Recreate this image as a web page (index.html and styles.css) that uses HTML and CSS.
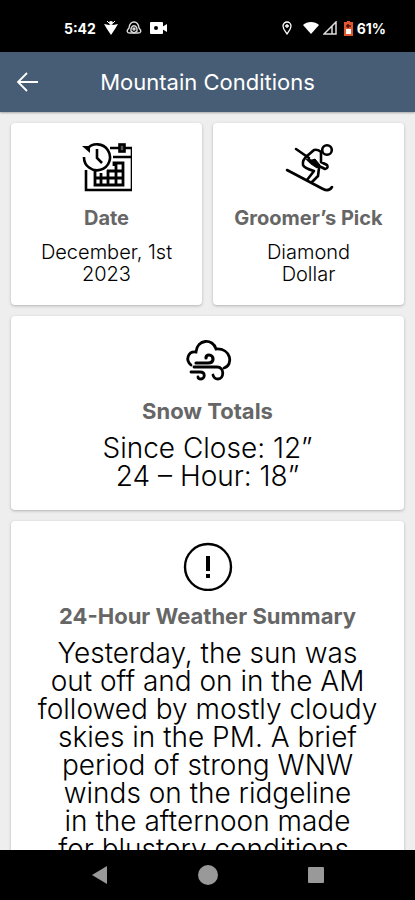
FILE: index.html
```html
<!DOCTYPE html>
<html lang="en">
    <head>
        <meta charset="UTF-8">
        <meta name="viewport" content="width=device-width, initial-scale=1.0">
        <title>Mountain Conditions</title>
        <link rel="stylesheet" href="styles.css">
    </head>

    <body>
        <div class="status-bar">
            <div class="status-group status-left">
                <span>5:42</span>
                <svg width="14" height="16" viewBox="0 0 14 16" fill="#fff">
                    <path d="M0 4l5 1h4l5-1-3 5-4 6-4-6z"/>
                    <circle cx="7" cy="3" r="2"/>
                    <path d="M3 1l2 2M11 1L9 3" stroke="#fff"/>
                </svg>
                <svg width="16" height="16" viewBox="0 0 16 16" fill="none" stroke="#ddd" stroke-width="1.4">
                    <path d="M3 8c1-8 9-8 10 0 3 3 2 5-1 5H4c-3 0-4-2-1-5z"/>
                    <path d="M5 11c-1-7 7-7 6 0l-3 2z"/>
                    <circle cx="8" cy="9" r="1"/>
                </svg>
                <svg width="17" height="14" viewBox="0 0 17 14" fill="#fff">
                    <rect x="0" y="1" width="13" height="12" rx="1"/>
                    <path d="M12 6l5-3v8l-5-3z"/>
                    <circle cx="6" cy="7" r="2" fill="#000"/>
                </svg>
            </div>
            <div class="status-group status-right">
                <svg class="pin" width="10" height="14" viewBox="0 0 10 14" fill="none" stroke="#fff" stroke-width="1.3">
                    <path d="M5 13C3 10 1 8 1 5a4 4 0 0 1 8 0c0 3-2 5-4 8zM5 3v4M3 5h4"/>
                </svg>
                <svg width="16" height="14" viewBox="0 0 16 14" fill="#fff">
                    <path d="M0 4c4-4 12-4 16 0L8 13z"/>
                </svg>
                <svg width="14" height="14" viewBox="0 0 14 14" fill="none" stroke="#ddd" stroke-width="1.5">
                    <path d="M13 1v12H1zM9 5v8"/>
                </svg>
                <svg class="battery" width="9" height="15" viewBox="0 0 9 15">
                    <path d="M3 0h3v1h3v14H0V1h3z" fill="#e0562f"/>
                    <path d="M2 8h5v5H2z" fill="#fff"/>
                    <path d="M2 5h5M4 3v4" stroke="#411" stroke-width="1.5"/>
                </svg>
                <span>61%</span>
            </div>
        </div>

        <header class="header">
            <a class="back" href="#" aria-label="Back">
                <svg width="24" height="22" viewBox="0 0 24 22" fill="none" stroke="#fff" stroke-width="1.8">
                    <path d="M22 11H2M11 2L2 11l9 9"/>
                </svg>
            </a>
            <h1>Mountain Conditions</h1>
        </header>

        <main class="conditions">
            <section class="card">
                <svg class="icon" viewBox="0 0 50 50" fill="none" stroke="#000" stroke-width="2.6">
                    <path d="M28 5h9M43 5h7v42H4V27M31 14h18"/>
                    <rect x="37.5" y="1.5" width="5" height="7" fill="#555"/>
                    <path d="M13 28v14h28V20h-9v3M12 35h29M25 28h16M19 30v12M26 27v15M34 20v22" stroke-width="2.8"/>
                    <path d="M5 6A13 13 0 1 1 2 14"/>
                    <path d="M0 3h8v7z" fill="#000" stroke="none"/>
                    <path d="M15 6v9l5 5"/>
                </svg>
                <h2>Date</h2>
                <p>December, 1st<br>2023</p>
            </section>

            <section class="card">
                <svg class="icon" viewBox="0 0 50 50" fill="none" stroke="#000" stroke-width="2.6" stroke-linecap="round" stroke-linejoin="round">
                    <circle cx="43" cy="7" r="4.8"/>
                    <path d="M3 27l36 19q6 3 9-2"/>
                    <path d="M12 6l13 9"/>
                    <path d="M23 13l7-6q4-1 7 2v10l6 3q2 3-2 4l-10-5"/>
                    <path d="M23 13q-5 4-4 9 1 3 11 6l-7 9M35 25l-1 8-6 6"/>
                    <path d="M22 16l6 1 3-1 5 6-3 3-6-4z" fill="#000" stroke-width="1"/>
                </svg>
                <h2>Groomer’s Pick</h2>
                <p>Diamond<br>Dollar</p>
            </section>

            <section class="card wide">
                <svg class="icon" viewBox="0 0 50 50" fill="none" stroke="#000" stroke-width="2.8" stroke-linecap="round">
                    <path d="M8 29C2 24 5 15 13 16 14 3 30 2 33 13c15-1 18 16 8 19"/>
                    <path d="M13 27h12c7 0 6-8 1-8q-3 0-3 3" stroke-width="3.2"/>
                    <path d="M11 31h23c8 0 7 12 1 12q-4 0-5-4"/>
                    <path d="M8 36h9c6 0 5 7 1 7q-3 0-3-2"/>
                </svg>
                <h2>Snow Totals</h2>
                <p>Since Close: 12”<br>24 – Hour: 18”</p>
            </section>

            <section class="card wide">
                <svg class="icon" viewBox="0 0 50 50" fill="none" stroke="#000">
                    <circle cx="25" cy="26" r="23" stroke-width="2.4"/>
                    <path d="M25 15v15M25 33v4" stroke-width="4"/>
                </svg>
                <h2>24-Hour Weather Summary</h2>
                <p>Yesterday, the sun was<br>out off and on in the AM<br>followed by mostly cloudy<br>skies in the PM. A brief<br>period of strong WNW<br>winds on the ridgeline<br>in the afternoon made<br>for blustery conditions.</p>
            </section>
        </main>

        <nav class="nav-bar">
            <button aria-label="Back">
                <svg width="20" height="20" viewBox="0 0 20 20" fill="#999"><path d="M2 10L17 1v18z"/></svg>
            </button>
            <button aria-label="Home">
                <svg width="20" height="20" viewBox="0 0 20 20" fill="#999"><circle cx="10" cy="10" r="10"/></svg>
            </button>
            <button aria-label="Recent apps">
                <svg width="20" height="20" viewBox="0 0 20 20" fill="#999"><rect x="2" y="2" width="16" height="16" rx="1"/></svg>
            </button>
        </nav>
    </body>
</html>
```
FILE: styles.css
```css
* {
    box-sizing: border-box;
}

body {
    display: flex;
    flex-direction: column;
    height: 100vh;
    margin: 0;
    background-color: #eee;
    font-family: Inter, "Open Sans", sans-serif;
    color: #000;
}

.status-bar {
    display: flex;
    flex-shrink: 0;
    justify-content: space-between;
    height: 52px;
    padding: 4px 29px 0 64px;
    background-color: #000;
    color: #fff;
    font-size: 14px;
    font-weight: 700;
}

.status-group {
    display: flex;
    align-items: center;
}

.status-left {
    gap: 8px;
}

.status-right {
    gap: 4px;
}

.pin {
    margin-right: 7px;
}

.battery {
    margin-left: 3px;
}

.header {
    display: grid;
    grid-template-columns: 56px 1fr 56px;
    flex-shrink: 0;
    align-items: center;
    height: 60px;
    background-color: #475d75;
    box-shadow: 0 1px 2px rgba(0, 0, 0, 0.3);
}

.back {
    display: flex;
    padding-left: 16px;
}

.header h1 {
    margin: 0;
    color: #fff;
    font-size: 22px;
    font-weight: 400;
    text-align: center;
}

.conditions {
    display: grid;
    grid-template-columns: 1fr 1fr;
    flex: 1;
    align-content: start;
    gap: 11px;
    min-height: 0;
    padding: 11px;
    overflow-y: auto;
    scrollbar-width: none;
}

.card {
    display: flex;
    flex-direction: column;
    align-items: center;
    padding: 20px 0;
    border-radius: 4px;
    background-color: #fff;
    box-shadow: 0 1px 3px rgba(0, 0, 0, 0.25);
    text-align: center;
}

.wide {
    grid-column: span 2;
}

.icon {
    width: 50px;
    height: 50px;
}

.card h2 {
    margin: 13px 0 11px;
    color: #666;
    font-size: 20px;
    font-weight: 700;
    line-height: 24px;
}

.card p {
    margin: 0;
    font-size: 20px;
    font-weight: 300;
    line-height: 22px;
}

.wide h2 {
    font-size: 22px;
}

.wide p {
    font-size: 28px;
    line-height: 28px;
}

.nav-bar {
    display: flex;
    flex-shrink: 0;
    align-items: center;
    justify-content: center;
    gap: 88px;
    height: 50px;
    background-color: #000;
}

.nav-bar button {
    display: flex;
    padding: 0;
    border: none;
    background: none;
}
```
